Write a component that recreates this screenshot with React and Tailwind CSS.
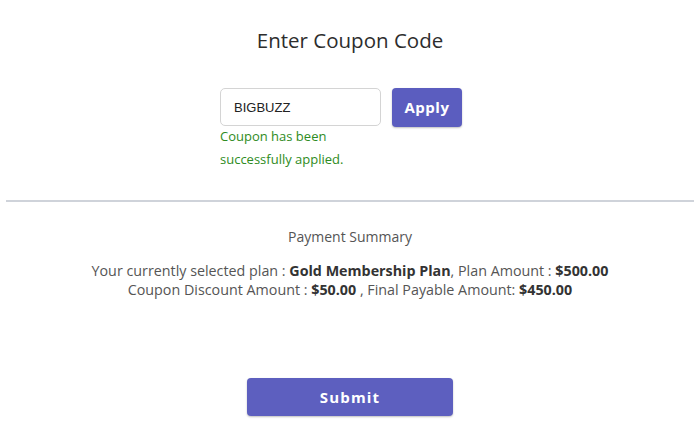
export default function App() {
  return (
    <div className="min-h-[436px] w-[700px] bg-white font-['Open_Sans',sans-serif] text-[#333]">
      <div className="flex flex-col items-center pt-[27px]">
        <h1 className="text-[20.5px] leading-[26px] text-[#2d2d2d]">Enter Coupon Code</h1>
      </div>

      <div className="mx-auto mt-[35px] w-[260px]">
        <div className="flex items-start gap-[11px]">
          <input
            readOnly
            value="BIGBUZZ"
            className="h-[38px] w-[161px] rounded-[5px] border border-[#d4d4d4] bg-white px-[13px] font-['Liberation_Sans',sans-serif] text-[13px] text-[#222] outline-none"
          />
          <button className="h-[39px] w-[70px] rounded-[4px] bg-[#5b5dbf] text-[15px] font-bold tracking-[0.5px] text-white shadow-[0_1px_2px_rgba(0,0,0,0.25)]">
            Apply
          </button>
        </div>
        <p className="mt-[-2px] text-[13px] leading-[23px] text-[#2e8b22]">
          Coupon has been
          <br />
          successfully applied.
        </p>
      </div>

      <div className="mx-[6px] mt-[29px] h-[2px] bg-[#cfd3da]" />

      <div className="flex flex-col items-center pt-[25px] text-[#555]">
        <p className="text-[14px] leading-[20px]">Payment Summary</p>
        <p className="mt-[14px] text-center text-[14.3px] leading-[19px]">
          Your currently selected plan : <b className="text-[#333]">Gold Membership Plan</b>, Plan Amount :{" "}
          <b className="text-[#333]">$500.00</b>
          <br />
          Coupon Discount Amount : <b className="text-[#333]">$50.00</b> , Final Payable Amount:{" "}
          <b className="text-[#333]">$450.00</b>
        </p>
      </div>

      <div className="mt-[79px] flex justify-center">
        <button className="h-[38px] w-[206px] rounded-[4px] bg-[#5d5fbf] text-[15px] font-bold tracking-[1.2px] text-white shadow-[0_1px_2px_rgba(0,0,0,0.25)]">
          Submit
        </button>
      </div>
    </div>
  );
}
